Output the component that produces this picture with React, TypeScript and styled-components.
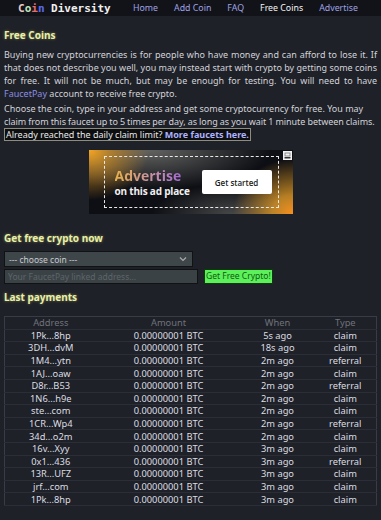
import React from "react";
import styled, { createGlobalStyle } from "styled-components";

const GlobalStyle = createGlobalStyle`
  html, body {
    margin: 0;
    padding: 0;
    background: #1f2128;
  }
  body {
    font-family: "Noto Sans", "Open Sans", sans-serif;
    color: #d4d4d8;
  }
`;

const payments = [
  ["1Pk...8hp", "5s ago", "claim"],
  ["3DH...dvM", "18s ago", "claim"],
  ["1M4...ytn", "2m ago", "referral"],
  ["1AJ...oaw", "2m ago", "claim"],
  ["D8r...B53", "2m ago", "referral"],
  ["1N6...h9e", "2m ago", "claim"],
  ["ste...com", "2m ago", "claim"],
  ["1CR...Wp4", "2m ago", "referral"],
  ["34d...o2m", "2m ago", "claim"],
  ["16v...Xyy", "3m ago", "claim"],
  ["0x1...436", "3m ago", "referral"],
  ["13R...UFZ", "3m ago", "claim"],
  ["jrf...com", "3m ago", "claim"],
  ["1Pk...8hp", "3m ago", "claim"],
];

const navItems = ["Home", "Add Coin", "FAQ", "Free Coins", "Advertise"];

export default function App() {
  return (
    <>
      <GlobalStyle />
      <Header>
        <Logo>
          <span style={{ color: "#e6c9c9" }}>C</span>
          <span style={{ color: "#bfe3bf" }}>o</span>
          <span style={{ color: "#e07070" }}>i</span>
          <span style={{ color: "#5a6cf0" }}>n</span> Diversity
        </Logo>
        <Nav>
          {navItems.map((item) => (
            <NavLink key={item} $active={item === "Free Coins"}>
              {item}
            </NavLink>
          ))}
        </Nav>
      </Header>
      <Main>
        <Title>Free Coins</Title>
        <Paragraph>
          Buying new cryptocurrencies is for people who have money and can afford to lose it. If
          that does not describe you well, you may instead start with crypto by getting some coins
          for free. It will not be much, but may be enough for testing. You will need to have{" "}
          <TextLink>FaucetPay</TextLink> account to receive free crypto.
        </Paragraph>
        <Paragraph>
          Choose the coin, type in your address and get some cryptocurrency for free. You may
          <br />
          <TightLine>
            claim from this faucet up to 5 times per day, as long as you wait 1 minute between
            claims.
          </TightLine>
        </Paragraph>
        <Notice>
          Already reached the daily claim limit? <BoldLink>More faucets here.</BoldLink>
        </Notice>

        <AdWrap>
          <Ad>
            <AdFrame>
              <AdText>
                <AdTitle>Advertise</AdTitle>
                <AdSub>on this ad place</AdSub>
              </AdText>
              <AdButton>Get started</AdButton>
            </AdFrame>
            <AdBadge>
              <svg width="9" height="9" viewBox="0 0 9 9">
                <rect x="0" y="0" width="9" height="9" fill="#f2f2f2" />
                <rect x="2" y="2" width="5" height="3" fill="none" stroke="#777" strokeWidth="0.8" />
                <rect x="1.5" y="6" width="6" height="1.5" fill="#333" />
              </svg>
            </AdBadge>
          </Ad>
        </AdWrap>

        <Title>Get free crypto now</Title>
        <Form>
          <Select>
            <span>--- choose coin ---</span>
            <svg width="8" height="6" viewBox="0 0 8 6">
              <path d="M1 1.5 L4 4.5 L7 1.5" fill="none" stroke="#aaa" strokeWidth="1.2" />
            </svg>
          </Select>
          <FormRow>
            <AddressInput placeholder="Your FaucetPay linked address..." />
            <ClaimButton>Get Free Crypto!</ClaimButton>
          </FormRow>
        </Form>

        <Title>Last payments</Title>
        <Table>
          <colgroup>
            <col style={{ width: 92 }} />
            <col style={{ width: 144 }} />
            <col style={{ width: 74 }} />
            <col />
          </colgroup>
          <thead>
            <tr>
              <Th>Address</Th>
              <Th>Amount</Th>
              <Th>When</Th>
              <Th>Type</Th>
            </tr>
          </thead>
          <tbody>
            {payments.map(([addr, when, type], i) => (
              <tr key={i}>
                <Td>{addr}</Td>
                <Td>0.00000001 BTC</Td>
                <Td>{when}</Td>
                <Td>{type}</Td>
              </tr>
            ))}
          </tbody>
        </Table>
      </Main>
    </>
  );
}

const Header = styled.header`
  height: 16px;
  background: #121318;
  display: flex;
  align-items: center;
  padding-left: 18px;
`;

const Logo = styled.div`
  font-family: "DejaVu Sans Mono", "Liberation Mono", monospace;
  font-size: 11px;
  font-weight: bold;
  color: #f0f0f0;
  white-space: pre;
  width: 115px;
`;

const Nav = styled.nav`
  display: flex;
  gap: 16px;
`;

const NavLink = styled.a<{ $active?: boolean }>`
  font-size: 8.8px;
  color: ${(p) => (p.$active ? "#f4f4f4" : "#9fa2e6")};
  text-decoration: none;
`;

const Main = styled.main`
  padding: 6px 4px 0;
`;

const Title = styled.h2`
  margin: 0;
  font-size: 10px;
  font-weight: bold;
  color: #e9f0a6;
  text-shadow: 0 0 3px rgba(230, 240, 140, 0.45);
  padding: 6px 0 6px;
  line-height: 14px;
`;

const Paragraph = styled.p`
  margin: 0 0 2px;
  font-size: 9px;
  line-height: 13px;
  text-align: justify;
  color: #d2d3d8;
`;

const TightLine = styled.span`
  white-space: nowrap;
  letter-spacing: -0.05px;
  word-spacing: -0.2px;
`;

const TextLink = styled.a`
  color: #8a8ee0;
`;

const Notice = styled.div`
  width: fit-content;
  background: #0d0e10;
  border: 1px solid #8c8c80;
  padding: 0 1px;
  font-size: 9px;
  line-height: 11px;
  color: #e8e8e8;
  margin-top: -2px;
`;

const BoldLink = styled.a`
  color: #aeb2ff;
  font-weight: bold;
`;

const AdWrap = styled.div`
  display: flex;
  justify-content: center;
  padding: 9px 0 11px;
`;

const Ad = styled.div`
  position: relative;
  width: 204px;
  height: 64px;
  box-sizing: border-box;
  padding: 6px 14px 6px 15px;
  background:
    radial-gradient(ellipse 60px 50px at 0% 0%, #f5a623 0%, rgba(245, 166, 35, 0.6) 35%, transparent 100%),
    radial-gradient(ellipse 60px 55px at 100% 100%, #f7901e 0%, rgba(247, 170, 40, 0.7) 35%, transparent 100%),
    radial-gradient(ellipse 120px 40px at 30% 0%, rgba(200, 200, 190, 0.45), transparent 100%),
    radial-gradient(ellipse 80px 30px at 70% 100%, rgba(200, 200, 190, 0.3), transparent 100%),
    #0e0f14;
`;

const AdFrame = styled.div`
  height: 100%;
  box-sizing: border-box;
  border: 1.5px dashed #e8e8e8;
  display: flex;
  align-items: center;
  justify-content: space-between;
  padding: 0 6px 0 10px;
`;

const AdText = styled.div`
  display: flex;
  flex-direction: column;
  gap: 1px;
  font-family: "Open Sans", "Noto Sans", sans-serif;
  font-weight: bold;
`;

const AdTitle = styled.span`
  font-size: 14px;
  line-height: 17px;
  background: linear-gradient(90deg, #e6b04a, #c08ab8 60%, #9a5ad8);
  -webkit-background-clip: text;
  background-clip: text;
  color: transparent;
`;

const AdSub = styled.span`
  font-size: 10px;
  line-height: 12px;
  color: #f0f0f0;
  letter-spacing: -0.2px;
`;

const AdButton = styled.div`
  background: #ffffff;
  color: #1a1a1a;
  font-family: "Open Sans", "Noto Sans", sans-serif;
  font-weight: 600;
  font-size: 8px;
  border-radius: 2px;
  width: 70px;
  height: 24px;
  display: flex;
  align-items: center;
  justify-content: center;
`;

const AdBadge = styled.div`
  position: absolute;
  top: 1px;
  right: 1px;
  line-height: 0;
`;

const Form = styled.div`
  display: flex;
  flex-direction: column;
  gap: 2px;
`;

const Select = styled.div`
  width: 189px;
  height: 16px;
  box-sizing: border-box;
  background: #3f464a;
  border: 1px solid #111214;
  display: flex;
  align-items: center;
  justify-content: space-between;
  padding: 0 5px 0 4px;
  font-size: 8.5px;
  color: #c9cbcf;
`;

const FormRow = styled.div`
  display: flex;
  align-items: center;
  gap: 6px;
`;

const AddressInput = styled.input`
  width: 194px;
  height: 15px;
  box-sizing: border-box;
  background: #3b4246;
  border: 1px solid #111214;
  padding: 0 3px;
  font-family: "Noto Sans", sans-serif;
  font-size: 8.5px;
  color: #ccc;
  outline: none;
  &::placeholder {
    color: #5e6569;
  }
`;

const ClaimButton = styled.button`
  height: 15px;
  box-sizing: border-box;
  background: #5cf05a;
  border: 1px solid #0c3a0c;
  padding: 0 1px;
  font-family: "Noto Sans", sans-serif;
  font-size: 8.5px;
  color: #0f5c10;
  line-height: 1;
`;

const Table = styled.table`
  width: 100%;
  margin-top: 6px;
  border-collapse: collapse;
  border: 1px solid #393c46;
  table-layout: fixed;
  font-size: 9.3px;
  tr {
    border-bottom: 1px solid #2b2e37;
  }
`;

const Th = styled.th`
  font-weight: normal;
  color: #6f727b;
  height: 11.6px;
  padding: 0;
  line-height: 11px;
`;

const Td = styled.td`
  text-align: center;
  color: #dcdde2;
  height: 11.6px;
  padding: 0;
  line-height: 11px;
`;
